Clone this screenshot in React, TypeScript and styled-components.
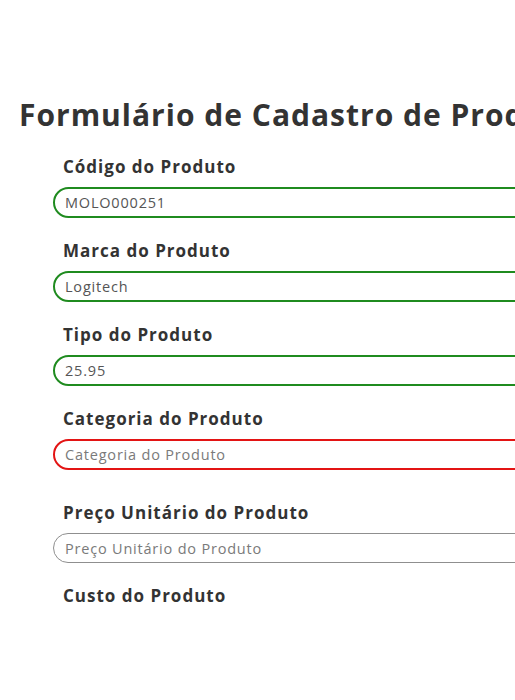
import React from "react";
import styled, { createGlobalStyle } from "styled-components";

const Global = createGlobalStyle`
  html, body { margin: 0; padding: 0; background: #fff; overflow: hidden; }
  body { font-family: "Open Sans", "DejaVu Sans", sans-serif; color: #333; }
`;

const Page = styled.div`
  width: 1000px;
  padding: 97px 0 0 19px;
`;

const Title = styled.h1`
  margin: 0 0 23px 0;
  font-size: 30px;
  line-height: 36px;
  font-weight: 700;
  letter-spacing: 1px;
  color: #333;
  white-space: nowrap;
`;

const Form = styled.form`
  display: flex;
  flex-direction: column;
  padding-left: 34px;
`;

const Field = styled.div<{ $extra?: boolean }>`
  display: flex;
  flex-direction: column;
  margin-bottom: ${(p) => (p.$extra ? 32 : 22)}px;
`;

const Label = styled.label`
  font-size: 17px;
  line-height: 22px;
  font-weight: 700;
  letter-spacing: 1px;
  color: #333;
  padding-left: 10px;
  margin-bottom: 9px;
  white-space: nowrap;
`;

type State = "valid" | "invalid" | "neutral";

const Input = styled.input<{ $state: State }>`
  box-sizing: border-box;
  width: 700px;
  height: ${(p) => (p.$state === "neutral" ? 30 : 31)}px;
  border-radius: 16px;
  border: ${(p) =>
    p.$state === "valid"
      ? "2px solid #1f8b1f"
      : p.$state === "invalid"
      ? "2px solid #e31414"
      : "1px solid #8f8f8f"};
  padding: 0 0 0 ${(p) => (p.$state === "neutral" ? 11 : 10)}px;
  font-family: "Open Sans", "DejaVu Sans", sans-serif;
  font-size: 14.5px;
  letter-spacing: 0.8px;
  color: #555;
  outline: none;
  background: #fff;
  &::placeholder { color: #7a7a7a; }
`;

const fields: { label: string; value?: string; state: State; extra?: boolean }[] = [
  { label: "Código do Produto", value: "MOLO000251", state: "valid" },
  { label: "Marca do Produto", value: "Logitech", state: "valid" },
  { label: "Tipo do Produto", value: "25.95", state: "valid" },
  { label: "Categoria do Produto", state: "invalid", extra: true },
  { label: "Preço Unitário do Produto", state: "neutral" },
];

export default function App() {
  return (
    <>
      <Global />
      <Page>
        <Title>Formulário de Cadastro de Produto</Title>
        <Form>
          {fields.map((f) => (
            <Field key={f.label} $extra={f.extra}>
              <Label>{f.label}</Label>
              <Input
                $state={f.state}
                defaultValue={f.value}
                placeholder={f.label}
                readOnly
              />
            </Field>
          ))}
          <Field>
            <Label>Custo do Produto</Label>
          </Field>
        </Form>
      </Page>
    </>
  );
}
